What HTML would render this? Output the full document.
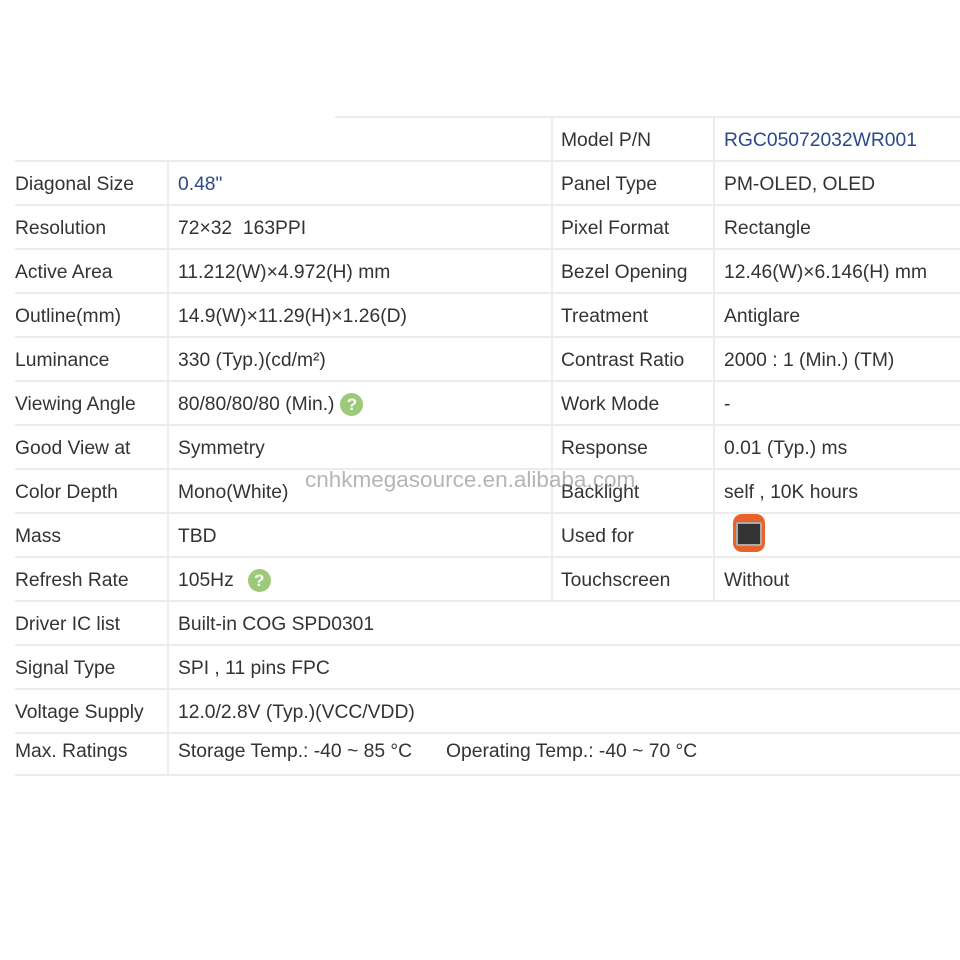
<!DOCTYPE html>
<html><head><meta charset="utf-8"><style>
body{margin:0;width:960px;height:960px;background:#fff;position:relative;overflow:hidden;font-family:"Liberation Sans",Arial,sans-serif;font-size:19.3px;color:#333}
.h{position:absolute;height:2px;background:#ececec}
.v{position:absolute;width:2px;background:#ececec}
.t{position:absolute;line-height:44px;white-space:nowrap;margin-top:3px}
.q{display:inline-block;width:23px;height:23px;border-radius:50%;background:#9cc97a;color:#fff;font-weight:bold;font-size:17px;line-height:23px;text-align:center;vertical-align:middle;margin-left:6px}
</style></head><body>
<div class="h" style="left:335px;top:116px;width:625px"></div>
<div class="h" style="left:15px;top:160px;width:945px"></div>
<div class="h" style="left:15px;top:204px;width:945px"></div>
<div class="h" style="left:15px;top:248px;width:945px"></div>
<div class="h" style="left:15px;top:292px;width:945px"></div>
<div class="h" style="left:15px;top:336px;width:945px"></div>
<div class="h" style="left:15px;top:380px;width:945px"></div>
<div class="h" style="left:15px;top:424px;width:945px"></div>
<div class="h" style="left:15px;top:468px;width:945px"></div>
<div class="h" style="left:15px;top:512px;width:945px"></div>
<div class="h" style="left:15px;top:556px;width:945px"></div>
<div class="h" style="left:15px;top:600px;width:945px"></div>
<div class="h" style="left:15px;top:644px;width:945px"></div>
<div class="h" style="left:15px;top:688px;width:945px"></div>
<div class="h" style="left:15px;top:732px;width:945px"></div>
<div class="h" style="left:15px;top:774px;width:945px"></div>
<div class="v" style="left:167px;top:160px;height:615px"></div>
<div class="v" style="left:551px;top:116px;height:485px"></div>
<div class="v" style="left:713px;top:116px;height:485px"></div>

<div class="t" style="left:561px;top:116px">Model P/N</div><div class="t" style="left:724px;top:116px;color:#2a4a8a">RGC05072032WR001</div>
<div class="t" style="left:15px;top:160px">Diagonal Size</div><div class="t" style="left:178px;top:160px;color:#2a4a8a">0.48"</div>
<div class="t" style="left:561px;top:160px">Panel Type</div><div class="t" style="left:724px;top:160px">PM-OLED, OLED</div>
<div class="t" style="left:15px;top:204px">Resolution</div><div class="t" style="left:178px;top:204px">72×32&nbsp;&nbsp;163PPI</div>
<div class="t" style="left:561px;top:204px">Pixel Format</div><div class="t" style="left:724px;top:204px">Rectangle</div>
<div class="t" style="left:15px;top:248px">Active Area</div><div class="t" style="left:178px;top:248px">11.212(W)×4.972(H) mm</div>
<div class="t" style="left:561px;top:248px">Bezel Opening</div><div class="t" style="left:724px;top:248px">12.46(W)×6.146(H) mm</div>
<div class="t" style="left:15px;top:292px">Outline(mm)</div><div class="t" style="left:178px;top:292px">14.9(W)×11.29(H)×1.26(D)</div>
<div class="t" style="left:561px;top:292px">Treatment</div><div class="t" style="left:724px;top:292px">Antiglare</div>
<div class="t" style="left:15px;top:336px">Luminance</div><div class="t" style="left:178px;top:336px">330 (Typ.)(cd/m²)</div>
<div class="t" style="left:561px;top:336px">Contrast Ratio</div><div class="t" style="left:724px;top:336px">2000 : 1 (Min.) (TM)</div>
<div class="t" style="left:15px;top:380px">Viewing Angle</div><div class="t" style="left:178px;top:380px">80/80/80/80 (Min.)<span class="q">?</span></div>
<div class="t" style="left:561px;top:380px">Work Mode</div><div class="t" style="left:724px;top:380px">-</div>
<div class="t" style="left:15px;top:424px">Good View at</div><div class="t" style="left:178px;top:424px">Symmetry</div>
<div class="t" style="left:561px;top:424px">Response</div><div class="t" style="left:724px;top:424px">0.01 (Typ.) ms</div>
<div class="t" style="left:15px;top:468px">Color Depth</div><div class="t" style="left:178px;top:468px">Mono(White)</div>
<div class="t" style="left:561px;top:468px">Backlight</div><div class="t" style="left:724px;top:468px">self , 10K hours</div>
<div class="t" style="left:15px;top:512px">Mass</div><div class="t" style="left:178px;top:512px">TBD</div>
<div class="t" style="left:561px;top:512px">Used for</div>
<div style="position:absolute;left:733px;top:514px;width:32px;height:38px;background:#e8622a;border-radius:9px"></div>
<div style="position:absolute;left:736px;top:522px;width:22px;height:20px;background:#333;border:2px solid #aaa;border-radius:2px"></div>
<div class="t" style="left:15px;top:556px">Refresh Rate</div><div class="t" style="left:178px;top:556px">105Hz<span class="q" style="margin-left:14px">?</span></div>
<div class="t" style="left:561px;top:556px">Touchscreen</div><div class="t" style="left:724px;top:556px">Without</div>
<div class="t" style="left:15px;top:600px">Driver IC list</div><div class="t" style="left:178px;top:600px">Built-in COG SPD0301</div>
<div class="t" style="left:15px;top:644px">Signal Type</div><div class="t" style="left:178px;top:644px">SPI , 11 pins FPC</div>
<div class="t" style="left:15px;top:688px">Voltage Supply</div><div class="t" style="left:178px;top:688px">12.0/2.8V (Typ.)(VCC/VDD)</div>
<div class="t" style="left:15px;top:727px">Max. Ratings</div><div class="t" style="left:178px;top:727px">Storage Temp.: -40 ~ 85 °C</div><div class="t" style="left:446px;top:727px">Operating Temp.: -40 ~ 70 °C</div>
<div class="t" style="left:305px;top:455px;color:rgba(120,120,120,0.55);font-size:22.5px">cnhkmegasource.en.alibaba.com</div>
</body></html>
